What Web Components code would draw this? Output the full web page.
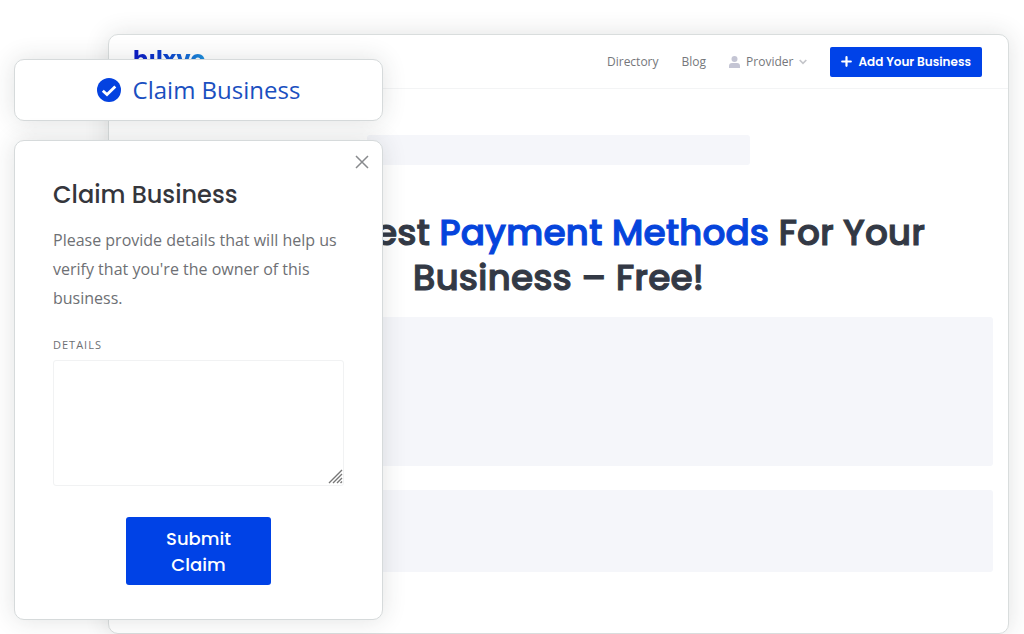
<!DOCTYPE html>
<html lang="en">
<head>
<meta charset="utf-8">
<title>Claim Business</title>
<style>
html, body { margin: 0; height: 100%; }
body { background: #fff; color: #6e7074; font-family: "Open Sans", "Noto Sans", sans-serif; }
</style>
</head>
<body>
<claim-stage>
  <site-window>
    <site-header slot="header"></site-header>
    <site-hero></site-hero>
  </site-window>
  <claim-badge slot="overlay">Claim Business</claim-badge>
  <claim-dialog slot="overlay" heading="Claim Business">Please provide details that will help us verify that you're the owner of this business.</claim-dialog>
</claim-stage>
<script>
const display = 'Poppins, Inter, sans-serif';

function define(name, html) {
  const template = document.createElement('template');
  template.innerHTML = '<style>*{box-sizing:border-box}</style>' + html;
  customElements.define(name, class extends HTMLElement {
    constructor() {
      super();
      this.attachShadow({ mode: 'open' }).append(template.content.cloneNode(true));
    }
    connectedCallback() {
      const title = this.shadowRoot.querySelector('[data-heading]');
      if (title) title.textContent = this.getAttribute('heading');
    }
  });
}

define('claim-stage', `
<style>
:host { display: flex; position: relative; box-sizing: border-box; min-height: 100%; padding: 34px 15px 0 108px; overflow: hidden; }
.overlay { position: absolute; top: 59px; left: 14px; width: 369px; display: grid; gap: 19px; }
</style>
<slot></slot>
<div class="overlay"><slot name="overlay"></slot></div>`);

define('site-window', `
<style>
:host { display: flex; flex-direction: column; flex: 1; min-width: 0; box-sizing: border-box; background: #fff; border: 1px solid #d9dddd; border-radius: 10px; box-shadow: 0 0 24px rgba(40,50,50,.14); }
</style>
<slot name="header"></slot>
<main><slot></slot></main>`);

define('site-header', `
<style>
:host { display: flex; align-items: center; justify-content: space-between; box-sizing: border-box; height: 54px; padding: 0 26px 0 24px; border-bottom: 1px solid #f3f4f5; }
a { color: inherit; text-decoration: none; }
.logo { align-self: flex-start; padding-top: 8px; font: 700 23px/32px ${display}; color: transparent; background: linear-gradient(90deg, #0b18c4, #0a45cf 50%, #1c8fdc); -webkit-background-clip: text; background-clip: text; }
nav { display: flex; align-items: center; gap: 23px; font: 12px/18px "Open Sans", sans-serif; color: #75777b; }
.provider { display: flex; align-items: center; gap: 6px; }
button { display: flex; align-items: center; gap: 6px; height: 30px; padding: 0 11px; border: 0; border-radius: 2px; background: #0042e8; color: #fff; font: 600 12px/18px ${display}; }
svg { display: block; }
</style>
<a class="logo" href="#">hılxvo</a>
<nav>
  <a href="#">Directory</a>
  <a href="#">Blog</a>
  <a class="provider" href="#">
    <svg width="11" height="12" viewBox="0 0 11 12" fill="#c4c5d4"><circle cx="5.5" cy="3" r="3"/><path d="M0 12V10Q0 7 3 7H8Q11 7 11 10V12Z"/></svg>
    Provider
    <svg width="8" height="6" viewBox="0 0 8 6" fill="none" stroke="#c4c5ca" stroke-width="1.7"><path d="M.7 1 4 4.3 7.3 1"/></svg>
  </a>
  <button type="button"><svg width="11" height="11" viewBox="0 0 11 11" stroke="#fff" stroke-width="2.2" stroke-linecap="round"><path d="M5.5 1.2v8.6M1.2 5.5h8.6"/></svg>Add Your Business</button>
</nav>`);

define('site-hero', `
<style>
:host { display: block; padding: 46px 15px 0; }
.bar, .block { background: #f5f6fa; border-radius: 3px; }
.bar { width: 44%; height: 30px; margin: 0 auto; }
h1 { margin: 45px 0 17px; color: #333945; text-align: center; font: 500 36px/45px ${display}; -webkit-text-stroke: 1px; }
em { color: #0544dc; font-style: normal; }
.block { height: 149px; }
.block + .block { height: 82px; margin-top: 24px; }
</style>
<div class="bar"></div>
<h1>Find The Best <em>Payment Methods</em> For Your<br>Business – Free!</h1>
<div class="block"></div>
<div class="block"></div>`);

const card = 'box-sizing:border-box; background:#fff; border:1px solid #d6dadb; border-radius:10px; box-shadow:0 0 24px rgba(40,50,50,.14);';

define('claim-badge', `
<style>
:host { display: flex; align-items: center; justify-content: center; gap: 12px; height: 62px; ${card} color: #1a4fc0; font-size: 24px; line-height: 32px; }
a { color: inherit; text-decoration: none; }
</style>
<svg width="24" height="24" viewBox="0 0 24 24"><circle cx="12" cy="12" r="12" fill="#0442e0"/><path d="M5.8 12.7 10 16.6 18.3 8.5" fill="none" stroke="#fff" stroke-width="2.8"/></svg>
<a href="#"><slot></slot></a>`);

define('claim-dialog', `
<style>
:host { display: block; position: relative; padding: 36px 38px 34px; ${card} }
.close { position: absolute; top: 14px; right: 13px; padding: 0; border: 0; background: none; }
svg { display: block; }
h2 { margin: 0; color: #35363c; font: 500 24px/36px ${display}; }
p { margin: 13px 0 21px; font-size: 16px; line-height: 29px; }
form { display: flex; flex-direction: column; }
label { margin-bottom: 4px; font-size: 11px; line-height: 22px; letter-spacing: 1px; }
textarea { width: 100%; height: 126px; border: 1px solid #f1f2f3; border-radius: 3px; background: none; resize: none; outline: none; display: block; }
.field { position: relative; }
.grip { position: absolute; right: 1px; bottom: 2px; pointer-events: none; }
.submit { width: 50%; margin: 31px auto 0; padding: 9px 32px 7px; border: 0; border-radius: 3px; background: #0042e6; color: #fff; font: 500 18px/26px ${display}; }
</style>
<button class="close" type="button" aria-label="Close"><svg width="14" height="14" viewBox="0 0 14 14" stroke="#888a8d" stroke-width="1.5"><path d="M1 1 13 13M13 1 1 13"/></svg></button>
<h2 data-heading></h2>
<p><slot></slot></p>
<form>
  <label for="details">DETAILS</label>
  <div class="field"><textarea id="details"></textarea>
    <svg class="grip" width="15" height="15" viewBox="0 0 15 15" stroke="#777" stroke-width="1.4"><path d="M1 14 14 1M5 14 14 5M9 14 14 9M12.5 14 14 12.5"/></svg></div>
  <button class="submit" type="button">Submit Claim</button>
</form>`);
</script>
</body>
</html>
